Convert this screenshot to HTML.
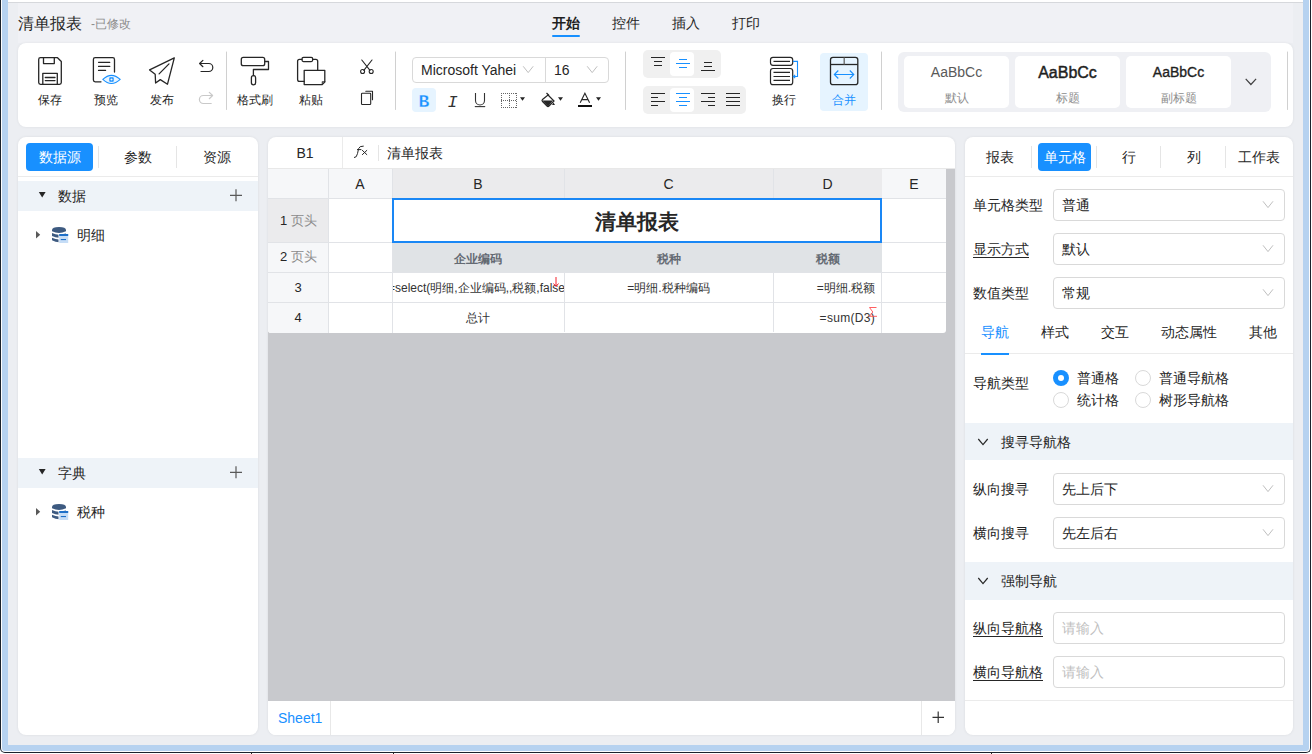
<!DOCTYPE html>
<html><head><meta charset="utf-8">
<style>
*{box-sizing:border-box;margin:0;padding:0}
html,body{width:1312px;height:754px;overflow:hidden;background:#fff}
body{position:relative;font-family:"Liberation Sans",sans-serif;color:#262626;font-size:14px}
.a{position:absolute}
.t{position:absolute;line-height:20px;white-space:nowrap}
svg{position:absolute;overflow:visible}
</style></head><body>
<!-- window frame -->
<div class="a" style="left:0;top:-20px;width:1311px;height:773px;border:1px solid #1a222c;border-top:none;border-radius:0 0 5px 5px;background:#fdfdfd"></div>
<div class="a" style="left:2px;top:-20px;width:1307px;height:771px;background:#b6d2f0;border-radius:0 0 3px 3px"></div>
<div class="a" style="left:8px;top:0;width:1295px;height:2px;background:#fff"></div>
<div class="a" style="left:8px;top:2px;width:1295px;height:1px;background:#d6d8dc"></div>
<div class="a" style="left:251px;top:752px;width:1px;height:2px;background:#222"></div>
<div class="a" style="left:393px;top:752px;width:1px;height:2px;background:#222"></div>
<div class="a" style="left:991px;top:752px;width:1px;height:2px;background:#222"></div>
<!-- app bg -->
<div id="app" class="a" style="left:8px;top:3px;width:1295px;height:742px;background:#eceef2"></div>
<div class="a" style="left:18px;top:3px;width:1275px;height:40px;background:#f0f1f5"></div>

<!-- title -->
<div class="t" style="left:18px;top:14px;font-size:16px;color:#262626">清单报表</div>
<div class="t" style="left:91px;top:14px;font-size:12px;color:#8c8c8c">-已修改</div>
<!-- top tabs -->
<div class="t" style="left:552px;top:13px;font-size:14px;font-weight:bold;color:#1f1f1f">开始</div>
<div class="a" style="left:552px;top:35px;width:28px;height:2px;background:#1890ff;border-radius:1px"></div>
<div class="t" style="left:612px;top:13px;font-size:14px">控件</div>
<div class="t" style="left:672px;top:13px;font-size:14px">插入</div>
<div class="t" style="left:732px;top:13px;font-size:14px">打印</div>

<!-- toolbar card -->
<div id="toolbar" class="a" style="left:18px;top:43px;width:1275px;height:84px;background:#fff;border-radius:8px;box-shadow:0 0 3px rgba(0,0,0,0.07)"></div>


<!-- TOOLBAR CONTENT -->
<svg style="left:0;top:0" width="1312" height="130" fill="none" stroke="#262626" stroke-width="1.3" stroke-linejoin="round" stroke-linecap="round">
 <!-- save -->
 <path d="M40.5 57.7 H57.5 L61.3 61.5 V82.5 Q61.3 84.3 59.5 84.3 H40.5 Q38.7 84.3 38.7 82.5 V59.5 Q38.7 57.7 40.5 57.7 Z"/>
 <path d="M43.5 57.7 V63.6 H54.3 V57.7"/>
 <path d="M42.8 84.3 V73.3 H57.3 V84.3"/>
 <path d="M45.3 77.5 H55 M45.3 80.6 H55"/>
 <!-- preview -->
 <path d="M101 81.8 H95.2 Q93.4 81.8 93.4 80 V59.5 Q93.4 57.7 95.2 57.7 H112.7 Q114.5 57.7 114.5 59.5 V72"/>
 <path d="M98.5 62.3 H109.8 M98.5 66.4 H109.8 M98.5 70.4 H105.6" stroke-width="1.2"/>
 <path d="M102.8 79.4 Q111.4 71.2 120.2 79.4 Q111.4 87.6 102.8 79.4 Z" stroke="#1890ff" stroke-width="1.1" fill="#e9f5ff"/>
 <rect x="109.3" y="77.3" width="4.4" height="4.4" rx="0.8" fill="#1890ff" stroke="none"/>
 <circle cx="111.5" cy="79.5" r="1.1" fill="#e9f5ff" stroke="none"/>
 <!-- publish -->
 <path d="M174.3 57.8 L149.6 69.9 L155.2 74.3 L155.6 83 L160.3 79.6 L167.5 84.2 Z"/>
 <path d="M159.1 73.9 L169 63.9"/>
 <!-- undo/redo -->
 <path d="M202.9 60.4 L199.6 63.5 L202.9 66.7 M199.6 63.5 H208.8 A4 4 0 0 1 208.8 71.5 H201" stroke-width="1.2"/>
 <path d="M209.3 92.4 L212.6 95.5 L209.3 98.7 M212.6 95.5 H203.4 A4 4 0 0 0 203.4 103.5 H211.2" stroke="#c9c9c9" stroke-width="1.2"/>
 <!-- brush -->
 <rect x="241.3" y="57.4" width="23.4" height="8.3" rx="2"/>
 <path d="M264.7 61.5 H268.5 V69.5 H253.4 V75.6"/>
 <rect x="251.4" y="75.6" width="4.2" height="9.2" rx="2.1"/>
 <!-- paste -->
 <path d="M304.2 81.3 H299.5 Q297.6 81.3 297.6 79.4 V61.2 Q297.6 59.3 299.5 59.3 H302 M312.7 59.3 H315.8 Q317.7 59.3 317.7 61.2 V70.3"/>
 <rect x="302" y="57.4" width="10.7" height="4.2" rx="1.5"/>
 <path d="M304.2 70.3 H324.8 V82 L322.2 84.6 H304.2 Z"/>
 <path d="M324.8 82 L322.2 84.6 V82 Z" fill="#777" stroke-width="0.8"/>
 <!-- scissors -->
 <path d="M361.8 60 L370 70.3 M372 60 L363.8 70.3" stroke-width="1.1"/>
 <circle cx="362.6" cy="71.5" r="2" stroke-width="1.1"/>
 <circle cx="371.2" cy="71.5" r="2" stroke-width="1.1"/>
 <!-- copy -->
 <rect x="361.5" y="93.2" width="9.2" height="11.3" rx="0.8" stroke-width="1.1"/>
 <path d="M365.8 91.2 H372.5 V99.8" stroke-width="1.1"/>
 <!-- separators -->
 <path d="M226.5 52 V109.5 M395.5 52 V109.5 M625.5 52 V109.5 M881.5 52 V109.5 M1287.5 52 V109.5" stroke="#d0d0d0" stroke-width="1"/>
</svg>
<div class="t" style="left:38px;top:90px;font-size:12px">保存</div>
<div class="t" style="left:94px;top:90px;font-size:12px">预览</div>
<div class="t" style="left:150px;top:90px;font-size:12px">发布</div>
<div class="t" style="left:237px;top:90px;font-size:12px">格式刷</div>
<div class="t" style="left:299px;top:90px;font-size:12px">粘贴</div>

<!-- font select -->
<div class="a" style="left:412px;top:57px;width:197px;height:26px;border:1px solid #d9d9d9;border-radius:4px"></div>
<div class="a" style="left:545px;top:58px;width:1px;height:24px;background:#d9d9d9"></div>
<div class="t" style="left:421px;top:60px;font-size:14px;color:#262626">Microsoft Yahei</div>
<div class="t" style="left:554px;top:60px;font-size:14px;color:#262626">16</div>
<svg style="left:0;top:0" width="700" height="130" fill="none" stroke="#bfbfbf" stroke-width="1">
 <path d="M523.2 66.3 L528.2 72.6 L533.2 66.3"/>
 <path d="M587.2 66.3 L592.2 72.6 L597.2 66.3"/>
</svg>
<!-- B I U -->
<div class="a" style="left:412px;top:88px;width:24px;height:24px;background:#e6f4ff;border-radius:4px"></div>
<svg style="left:0;top:0" width="700" height="130">
 <text x="424" y="106.5" text-anchor="middle" font-family="Liberation Mono" font-weight="bold" font-size="18" fill="#1890ff" stroke="#e6f4ff" stroke-width="0.3">B</text>
 <text x="452.5" y="106.5" text-anchor="middle" font-family="Liberation Mono" font-style="italic" font-size="17" fill="#333">I</text>
 <g fill="none" stroke="#333" stroke-width="1.1">
  <path d="M475.5 93 V100.5 A4.5 4.5 0 0 0 484.5 100.5 V93"/>
  <path d="M474.8 106.6 H485.2"/>
 </g>
 <g fill="none" stroke="#666" stroke-width="1" stroke-dasharray="1 1" shape-rendering="crispEdges">
  <path d="M501 93.5 H517 M501 107.5 H517 M501 100.5 H517 M501.5 93 V108 M516.5 93 V108 M509.5 93 V108"/>
 </g>
 <path d="M520 97.3 H525 L522.5 100.8 Z M558 97.3 H563 L560.5 100.8 Z M596 97.3 H601 L598.5 100.8 Z" fill="#262626"/>
 <!-- fill bucket -->
 <path d="M546.5 93 L549 95.5" stroke="#262626" stroke-width="1.2"/>
 <path d="M548 95 L554 101 L549 106 Q548 107 547 106 L542.5 101.5 Q541.5 100.5 542.5 99.5 Z" fill="#fff" stroke="#262626" stroke-width="1.2"/>
 <path d="M542.3 100.5 L553 100.5 L549 105.5 Q548 106.5 547 105.5 Z" fill="#262626"/>
 <path d="M553.5 102.5 L555 105 L552 105 Z" fill="#262626"/>
 <!-- A -->
 <path d="M580.2 102.8 L584.9 93.2 L589.6 102.8 M581.8 99.6 H588" fill="none" stroke="#262626" stroke-width="1.1"/>
 <rect x="578" y="105" width="14" height="2" fill="#111"/>
</svg>

<!-- align groups -->
<div class="a" style="left:643px;top:50px;width:78px;height:28px;background:#f0f0f0;border-radius:5px"></div>
<div class="a" style="left:670px;top:52px;width:24px;height:24px;background:#fff;border-radius:4px"></div>
<div class="a" style="left:643px;top:86px;width:103px;height:28px;background:#f0f0f0;border-radius:5px"></div>
<div class="a" style="left:670px;top:88px;width:24px;height:24px;background:#fff;border-radius:4px"></div>
<svg style="left:0;top:0" width="900" height="130" fill="none" stroke="#262626" stroke-width="1.2">
 <path d="M651 57.5 H665 M654 61.5 H662 M654 65.5 H662"/>
 <path d="M679 59.5 H687 M676 63.5 H690 M679 67.5 H687" stroke="#1890ff"/>
 <path d="M704 62.5 H712 M704 66.5 H712 M701 70.5 H715"/>
 <path d="M651 93.5 H665 M651 97.5 H658 M651 101.5 H665 M651 105.5 H658"/>
 <path d="M676 93.5 H690 M679 97.5 H687 M676 101.5 H690 M679 105.5 H687" stroke="#1890ff"/>
 <path d="M701 93.5 H715 M708 97.5 H715 M701 101.5 H715 M708 105.5 H715"/>
 <path d="M726 93.5 H740 M726 97.5 H740 M726 101.5 H740 M726 105.5 H740"/>
 <!-- wrap -->
 <rect x="770.5" y="57.3" width="22.2" height="8" rx="2.5"/>
 <path d="M773.5 61.4 H790"/>
 <rect x="770.5" y="68.5" width="22.2" height="16.2" rx="2.5"/>
 <path d="M773.5 72.4 H790 M773.5 76.5 H790 M773.5 80.4 H790"/>
 <path d="M793 61.4 H797.5 V76.5 H793.5 M795.2 74.8 L793.3 76.5 L795.2 78.2" stroke="#1890ff" stroke-width="1.1"/>
</svg>
<div class="t" style="left:772px;top:90px;font-size:12px">换行</div>
<!-- merge -->
<div class="a" style="left:820px;top:53px;width:48px;height:58px;background:#e6f4ff;border-radius:4px"></div>
<svg style="left:0;top:0" width="900" height="130" fill="none" stroke="#262626" stroke-width="1.3">
 <rect x="830.5" y="57.3" width="27.3" height="27.4" rx="2.5"/>
 <path d="M830.5 64.5 H857.8"/>
 <path d="M844.2 57.5 V64.5" stroke="#666"/>
 <path d="M834.3 74.5 H853.8 M838.3 70.5 L834.3 74.5 L838.3 78.5 M849.8 70.5 L853.8 74.5 L849.8 78.5" stroke="#1890ff" stroke-width="1.1"/>
</svg>
<div class="t" style="left:832px;top:90px;font-size:12px;color:#1890ff">合并</div>

<!-- styles gallery -->
<div class="a" style="left:898px;top:52px;width:373px;height:60px;background:#eff0f4;border-radius:6px"></div>
<div class="a" style="left:904px;top:56px;width:105px;height:52px;background:#fff;border-radius:5px"></div>
<div class="a" style="left:1015px;top:56px;width:105px;height:52px;background:#fff;border-radius:5px"></div>
<div class="a" style="left:1126px;top:56px;width:105px;height:52px;background:#fff;border-radius:5px"></div>
<div class="t" style="left:904px;width:105px;text-align:center;top:62px;font-size:14px;color:#595959">AaBbCc</div>
<div class="t" style="left:904px;width:105px;text-align:center;top:88px;font-size:12px;color:#8c8c8c">默认</div>
<div class="t" style="left:1015px;width:105px;text-align:center;top:63px;font-size:16px;-webkit-text-stroke:0.45px #1f1f1f;color:#1f1f1f">AaBbCc</div>
<div class="t" style="left:1015px;width:105px;text-align:center;top:88px;font-size:12px;color:#8c8c8c">标题</div>
<div class="t" style="left:1126px;width:105px;text-align:center;top:62px;font-size:14px;-webkit-text-stroke:0.35px #1f1f1f;color:#1f1f1f">AaBbCc</div>
<div class="t" style="left:1126px;width:105px;text-align:center;top:88px;font-size:12px;color:#8c8c8c">副标题</div>
<svg style="left:0;top:0" width="1312" height="130" fill="none" stroke="#404040" stroke-width="1.2">
 <path d="M1245.7 78.8 L1250.9 84.5 L1256.1 78.8"/>
</svg>

<!-- left panel -->
<div id="left" class="a" style="left:18px;top:137px;width:240px;height:598px;background:#fff;border-radius:8px;overflow:hidden;box-shadow:0 0 3px rgba(0,0,0,0.08)"></div>

<!-- center panel -->
<div id="center" class="a" style="left:268px;top:137px;width:687px;height:598px;background:#fff;border-radius:8px;overflow:hidden;box-shadow:0 0 3px rgba(0,0,0,0.08)"></div>


<!-- LEFT PANEL CONTENT -->
<div class="a" style="left:26px;top:143px;width:67px;height:28px;background:#1890ff;border-radius:4px"></div>
<div class="t" style="left:26px;width:67px;text-align:center;top:147px;font-size:14px;color:#fff">数据源</div>
<div class="a" style="left:98px;top:146px;width:1px;height:22px;background:#e5e5e5"></div>
<div class="t" style="left:104px;width:67px;text-align:center;top:147px;font-size:14px">参数</div>
<div class="a" style="left:176px;top:146px;width:1px;height:22px;background:#e5e5e5"></div>
<div class="t" style="left:183px;width:67px;text-align:center;top:147px;font-size:14px">资源</div>
<div class="a" style="left:18px;top:176px;width:240px;height:1px;background:#ebebeb"></div>
<div class="a" style="left:18px;top:181px;width:240px;height:30px;background:#eef3f8"></div>
<div class="t" style="left:58px;top:186px;font-size:14px">数据</div>
<div class="a" style="left:18px;top:458px;width:240px;height:30px;background:#eef3f8"></div>
<div class="t" style="left:58px;top:463px;font-size:14px">字典</div>
<div class="t" style="left:77px;top:225px;font-size:14px">明细</div>
<div class="t" style="left:77px;top:502px;font-size:14px">税种</div>
<svg style="left:0;top:0" width="300" height="754">
 <path d="M38.8 192 H45.6 L42.2 197.5 Z" fill="#262626"/>
 <path d="M38.8 469 H45.6 L42.2 474.5 Z" fill="#262626"/>
 <path d="M230 195.3 H242 M236 189.3 V201.3" stroke="#595959" stroke-width="1.2"/>
 <path d="M230 472.3 H242 M236 466.3 V478.3" stroke="#595959" stroke-width="1.2"/>
 <path d="M36 231 L40.2 234.8 L36 238.6 Z" fill="#595959"/>
 <path d="M36 508 L40.2 511.8 L36 515.6 Z" fill="#595959"/>
 <g id="db">
  <path d="M52 230 Q52 227 59 227 Q66 227 66 230 V231.2 Q59 234.6 52 231.2 Z" fill="#3d5a80"/>
  <path d="M52 233 Q59 236.4 66 233 V236 Q59 239.4 52 236 Z" fill="#3d5a80"/>
  <path d="M52 237.8 Q59 241.2 66 237.8 V240.2 Q59 244.4 52 240.2 Z" fill="#3d5a80"/>
  <rect x="58.5" y="233.5" width="10" height="9.5" fill="#fff"/>
  <rect x="59.2" y="234" width="9" height="9" fill="#c6ddf6"/>
  <rect x="59.2" y="234" width="9" height="2" fill="#1f70c8"/>
  <rect x="60.8" y="239" width="5.2" height="1.1" fill="#1f70c8"/>
 </g>
 <use href="#db" transform="translate(0,277)"/>
</svg>

<!-- CENTER PANEL CONTENT -->
<div class="a" style="left:268px;top:169px;width:687px;height:532px;background:#c8c9cd"></div>
<div class="a" style="left:342px;top:137px;width:1px;height:32px;background:#ebebeb"></div>
<div class="a" style="left:268px;top:168px;width:687px;height:1px;background:#e8e8e8"></div>
<div class="t" style="left:268px;width:74px;text-align:center;top:143px;font-size:14px">B1</div>
<div class="a" style="left:378px;top:145px;width:1px;height:16px;background:#e5e5e5"></div>
<div class="t" style="left:387px;top:143px;font-size:14px">清单报表</div>
<svg style="left:0;top:0" width="400" height="200">
 <g fill="none" stroke="#262626" stroke-width="1" stroke-linecap="round">
  <path d="M354.4 157.6 Q356.6 157.9 357.5 153.6 L358.6 148.6 Q359.4 145.9 363.3 146.1"/>
  <path d="M357.4 149.6 H361"/>
  <path d="M362.4 150.4 L366.8 154.6 M366.8 150.4 L362.4 154.6"/>
 </g>
</svg>
<!-- grid -->
<div id="grid" class="a" style="left:268px;top:169px;width:678px;height:164px;background:#fff;overflow:hidden;border-radius:0 0 3px 3px">
 <!-- header row bg -->
 <div class="a" style="left:0;top:0;width:60px;height:29px;background:#f6f7f9"></div>
 <div class="a" style="left:60px;top:0;width:64px;height:29px;background:#f6f7f9"></div>
 <div class="a" style="left:124px;top:0;width:490px;height:29px;background:#ebebed"></div>
 <div class="a" style="left:614px;top:0;width:64px;height:29px;background:#f6f7f9"></div>
 <!-- row header bg -->
 <div class="a" style="left:0;top:29px;width:60px;height:44px;background:#ebebed"></div>
 <div class="a" style="left:0;top:73px;width:60px;height:91px;background:#f6f7f9"></div>
 <!-- row2 bg -->
 <div class="a" style="left:124px;top:73px;width:490px;height:30px;background:#e0e3e6"></div>
 <!-- lines -->
 <div class="a" style="left:0;top:29px;width:678px;height:1px;background:#e1e3e7"></div>
 <div class="a" style="left:0;top:73px;width:678px;height:1px;background:#e1e3e7"></div>
 <div class="a" style="left:0;top:103px;width:678px;height:1px;background:#e1e3e7"></div>
 <div class="a" style="left:0;top:133px;width:678px;height:1px;background:#e1e3e7"></div>
 <div class="a" style="left:60px;top:0;width:1px;height:164px;background:#e1e3e7"></div>
 <div class="a" style="left:124px;top:0;width:1px;height:164px;background:#e1e3e7"></div>
 <div class="a" style="left:296px;top:0;width:1px;height:29px;background:#e1e3e7"></div>
 <div class="a" style="left:296px;top:103px;width:1px;height:60px;background:#e1e3e7"></div>
 <div class="a" style="left:505px;top:0;width:1px;height:29px;background:#e1e3e7"></div>
 <div class="a" style="left:505px;top:103px;width:1px;height:60px;background:#e1e3e7"></div>
 <div class="a" style="left:613px;top:103px;width:1px;height:61px;background:#e1e3e7"></div><div class="a" style="left:613px;top:29px;width:1px;height:44px;background:#e1e3e7"></div>
 <!-- selection -->
 <div class="a" style="left:124px;top:29px;width:490px;height:45px;border:2px solid #1a87f5"></div>
 <!-- headers text -->
 <div class="t" style="left:60px;width:64px;text-align:center;top:5px;font-size:14px">A</div>
 <div class="t" style="left:124px;width:172px;text-align:center;top:5px;font-size:14px">B</div>
 <div class="t" style="left:296px;width:209px;text-align:center;top:5px;font-size:14px">C</div>
 <div class="t" style="left:505px;width:109px;text-align:center;top:5px;font-size:14px">D</div>
 <div class="t" style="left:614px;width:64px;text-align:center;top:5px;font-size:14px">E</div>
 <div class="t" style="left:12px;top:42px;font-size:13px">1 <span style="color:#8c8c8c">页头</span></div>
 <div class="t" style="left:12px;top:78px;font-size:13px">2 <span style="color:#8c8c8c">页头</span></div>
 <div class="t" style="left:0;width:60px;text-align:center;top:109px;font-size:13px">3</div>
 <div class="t" style="left:0;width:60px;text-align:center;top:139px;font-size:13px">4</div>
 <!-- cells -->
 <div class="t" style="left:124px;width:490px;text-align:center;top:41px;font-size:21px;line-height:24px;font-weight:bold;color:#262626">清单报表</div>
 <div class="t" style="left:124px;width:172px;text-align:center;top:80px;font-size:12px;font-weight:bold;color:#646a73">企业编码</div>
 <div class="t" style="left:296px;width:209px;text-align:center;top:80px;font-size:12px;font-weight:bold;color:#646a73">税种</div>
 <div class="t" style="left:505px;width:109px;text-align:center;top:80px;font-size:12px;font-weight:bold;color:#646a73">税额</div>
 <div class="a" style="left:125px;top:104px;width:171px;height:29px;overflow:hidden">
  <div class="t" style="left:-100px;width:371px;text-align:center;top:5px;font-size:12px;color:#333">=select(明细,企业编码,,税额,false)</div>
 </div>
 <div class="t" style="left:296px;width:209px;text-align:center;top:109px;font-size:12px;color:#333">=明细.税种编码</div>
 <div class="t" style="left:505px;width:102px;text-align:right;top:109px;font-size:12px;color:#333">=明细.税额</div>
 <div class="t" style="left:124px;width:172px;text-align:center;top:139px;font-size:12px;color:#333">总计</div>
 <div class="t" style="left:505px;width:102px;text-align:right;top:139px;font-size:12px;letter-spacing:0.3px;color:#333">=sum(D3)</div>
 <svg style="left:0;top:0" width="678" height="163" fill="none" stroke="#f5222d" stroke-width="1">
  <path d="M288 108 V117 M285.5 114.5 L288 117.5 L290.5 114.5"/>
  <path d="M608.5 138.5 H601.5 L604.8 143 L601.5 147.3 H609" stroke="#ff4d4f" stroke-width="0.9"/>
 </svg>
</div>
<!-- sheet bar -->
<div class="a" style="left:268px;top:701px;width:687px;height:34px;background:#fff;border-radius:0 0 8px 8px"></div>
<div class="t" style="left:278px;top:708px;font-size:14px;color:#1890ff">Sheet1</div>
<div class="a" style="left:330px;top:701px;width:1px;height:34px;background:#e8e8e8"></div>
<div class="a" style="left:921px;top:701px;width:1px;height:34px;background:#e8e8e8"></div>
<svg style="left:0;top:0" width="1000" height="754">
 <path d="M932.5 717.3 H944 M938.2 711.5 V723" stroke="#333" stroke-width="1.2"/>
</svg>

<!-- right panel -->
<div id="right" class="a" style="left:965px;top:137px;width:328px;height:598px;background:#fff;border-radius:8px;overflow:hidden;box-shadow:0 0 3px rgba(0,0,0,0.08)"></div>


<!-- RIGHT PANEL CONTENT -->
<div class="t" style="left:986px;top:147px;font-size:14px">报表</div>
<div class="a" style="left:1031px;top:146px;width:1px;height:22px;background:#e5e5e5"></div>
<div class="a" style="left:1038px;top:143px;width:53px;height:28px;background:#1890ff;border-radius:4px"></div>
<div class="t" style="left:1038px;width:53px;text-align:center;top:147px;font-size:14px;color:#fff">单元格</div>
<div class="a" style="left:1096px;top:146px;width:1px;height:22px;background:#e5e5e5"></div>
<div class="t" style="left:1122px;top:147px;font-size:14px">行</div>
<div class="a" style="left:1160px;top:146px;width:1px;height:22px;background:#e5e5e5"></div>
<div class="t" style="left:1187px;top:147px;font-size:14px">列</div>
<div class="a" style="left:1225px;top:146px;width:1px;height:22px;background:#e5e5e5"></div>
<div class="t" style="left:1238px;top:147px;font-size:14px">工作表</div>
<div class="a" style="left:965px;top:176px;width:328px;height:1px;background:#ebebeb"></div>
<div class="t" style="left:973px;top:195px;font-size:14px">单元格类型</div>
<div class="t" style="left:973px;top:239px;font-size:14px;text-decoration:underline;text-underline-offset:3px">显示方式</div>
<div class="t" style="left:973px;top:283px;font-size:14px">数值类型</div>
<div class="a" style="left:1053px;top:189px;width:232px;height:32px;border:1px solid #d9d9d9;border-radius:4px;background:#fff"></div>
<div class="t" style="left:1062px;top:195px;font-size:14px;color:#262626">普通</div>
<svg style="left:0;top:0" width="1312" height="754" fill="none" stroke="#bfbfbf" stroke-width="1"><path d="M1263 201.3 L1268 207.6 L1273 201.3"/></svg>
<div class="a" style="left:1053px;top:233px;width:232px;height:32px;border:1px solid #d9d9d9;border-radius:4px;background:#fff"></div>
<div class="t" style="left:1062px;top:239px;font-size:14px;color:#262626">默认</div>
<svg style="left:0;top:0" width="1312" height="754" fill="none" stroke="#bfbfbf" stroke-width="1"><path d="M1263 245.3 L1268 251.6 L1273 245.3"/></svg>
<div class="a" style="left:1053px;top:277px;width:232px;height:32px;border:1px solid #d9d9d9;border-radius:4px;background:#fff"></div>
<div class="t" style="left:1062px;top:283px;font-size:14px;color:#262626">常规</div>
<svg style="left:0;top:0" width="1312" height="754" fill="none" stroke="#bfbfbf" stroke-width="1"><path d="M1263 289.3 L1268 295.6 L1273 289.3"/></svg>

<div class="t" style="left:981px;top:322px;font-size:14px;color:#1890ff">导航</div>
<div class="t" style="left:1041px;top:322px;font-size:14px">样式</div>
<div class="t" style="left:1101px;top:322px;font-size:14px">交互</div>
<div class="t" style="left:1161px;top:322px;font-size:14px">动态属性</div>
<div class="t" style="left:1249px;top:322px;font-size:14px">其他</div>
<div class="a" style="left:965px;top:353px;width:328px;height:1px;background:#ebebeb"></div>
<div class="a" style="left:981px;top:353px;width:28px;height:2px;background:#1890ff"></div>
<div class="t" style="left:973px;top:373px;font-size:14px">导航类型</div>
<div class="a" style="left:1053px;top:370px;width:16px;height:16px;border-radius:50%;background:#1890ff"></div>
<div class="a" style="left:1058px;top:375px;width:6px;height:6px;border-radius:50%;background:#fff"></div>
<div class="a" style="left:1053px;top:392px;width:16px;height:16px;border-radius:50%;border:1px solid #d9d9d9"></div>
<div class="a" style="left:1135px;top:370px;width:16px;height:16px;border-radius:50%;border:1px solid #d9d9d9"></div>
<div class="a" style="left:1135px;top:392px;width:16px;height:16px;border-radius:50%;border:1px solid #d9d9d9"></div>
<div class="t" style="left:1077px;top:368px;font-size:14px">普通格</div>
<div class="t" style="left:1077px;top:390px;font-size:14px">统计格</div>
<div class="t" style="left:1159px;top:368px;font-size:14px">普通导航格</div>
<div class="t" style="left:1159px;top:390px;font-size:14px">树形导航格</div>
<div class="a" style="left:965px;top:423px;width:328px;height:37px;background:#eef3f8"></div>
<div class="t" style="left:1001px;top:432px;font-size:14px">搜寻导航格</div>
<div class="t" style="left:973px;top:479px;font-size:14px">纵向搜寻</div>
<div class="t" style="left:973px;top:523px;font-size:14px">横向搜寻</div>
<div class="a" style="left:1053px;top:473px;width:232px;height:32px;border:1px solid #d9d9d9;border-radius:4px;background:#fff"></div>
<div class="t" style="left:1062px;top:479px;font-size:14px;color:#262626">先上后下</div>
<svg style="left:0;top:0" width="1312" height="754" fill="none" stroke="#bfbfbf" stroke-width="1"><path d="M1263 485.3 L1268 491.6 L1273 485.3"/></svg>
<div class="a" style="left:1053px;top:517px;width:232px;height:32px;border:1px solid #d9d9d9;border-radius:4px;background:#fff"></div>
<div class="t" style="left:1062px;top:523px;font-size:14px;color:#262626">先左后右</div>
<svg style="left:0;top:0" width="1312" height="754" fill="none" stroke="#bfbfbf" stroke-width="1"><path d="M1263 529.3 L1268 535.6 L1273 529.3"/></svg>

<div class="a" style="left:965px;top:562px;width:328px;height:38px;background:#eef3f8"></div>
<div class="t" style="left:1001px;top:571px;font-size:14px">强制导航</div>
<div class="t" style="left:973px;top:618px;font-size:14px;text-decoration:underline;text-underline-offset:3px">纵向导航格</div>
<div class="t" style="left:973px;top:662px;font-size:14px;text-decoration:underline;text-underline-offset:3px">横向导航格</div>
<div class="a" style="left:1053px;top:612px;width:232px;height:32px;border:1px solid #d9d9d9;border-radius:4px;background:#fff"></div>
<div class="t" style="left:1062px;top:618px;font-size:14px;color:#bfbfbf">请输入</div>
<div class="a" style="left:1053px;top:656px;width:232px;height:32px;border:1px solid #d9d9d9;border-radius:4px;background:#fff"></div>
<div class="t" style="left:1062px;top:662px;font-size:14px;color:#bfbfbf">请输入</div>

<div class="a" style="left:965px;top:700px;width:328px;height:1px;background:#ebebeb"></div>
<svg style="left:0;top:0" width="1312" height="754" fill="none" stroke="#262626" stroke-width="1.2">
 <path d="M978.3 439 L983 444.6 L987.7 439"/>
 <path d="M978.3 578 L983 583.6 L987.7 578"/>
</svg>

</body></html>
